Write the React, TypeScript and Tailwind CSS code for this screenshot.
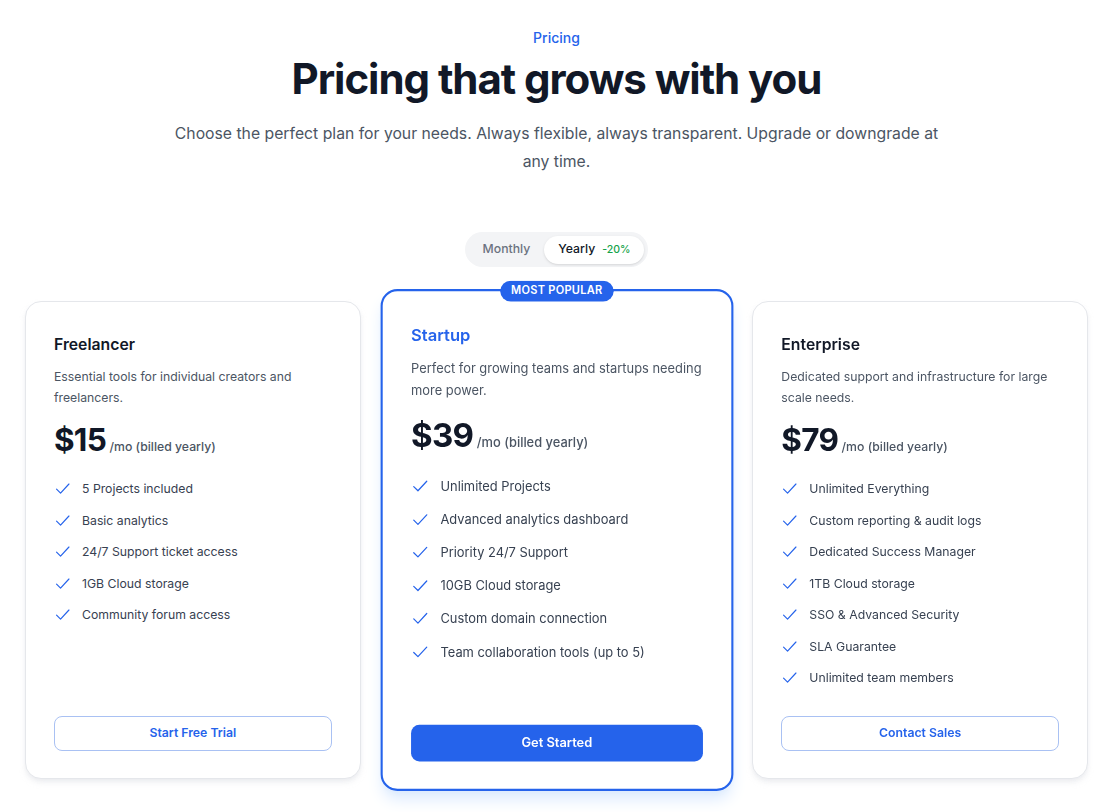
import { useState } from 'react';

type Plan = {
  name: string;
  desc: string;
  price: string;
  features: string[];
  cta: string;
  popular?: boolean;
};

const plans: Plan[] = [
  {
    name: 'Freelancer',
    desc: 'Essential tools for individual creators and freelancers.',
    price: '$15',
    features: ['5 Projects included', 'Basic analytics', '24/7 Support ticket access', '1GB Cloud storage', 'Community forum access'],
    cta: 'Start Free Trial',
  },
  {
    name: 'Startup',
    desc: 'Perfect for growing teams and startups needing more power.',
    price: '$39',
    features: [
      'Unlimited Projects',
      'Advanced analytics dashboard',
      'Priority 24/7 Support',
      '10GB Cloud storage',
      'Custom domain connection',
      'Team collaboration tools (up to 5)',
    ],
    cta: 'Get Started',
    popular: true,
  },
  {
    name: 'Enterprise',
    desc: 'Dedicated support and infrastructure for large scale needs.',
    price: '$79',
    features: [
      'Unlimited Everything',
      'Custom reporting & audit logs',
      'Dedicated Success Manager',
      '1TB Cloud storage',
      'SSO & Advanced Security',
      'SLA Guarantee',
      'Unlimited team members',
    ],
    cta: 'Contact Sales',
  },
];

function CheckIcon() {
  return (
    <svg viewBox="0 0 24 24" fill="none" stroke="currentColor" strokeWidth={1.6} strokeLinecap="round" strokeLinejoin="round" className="h-[17.5px] w-[17.5px] shrink-0 text-[#2563eb]">
      <path d="M3.5 12.5 9 18 20.5 5.5" />
    </svg>
  );
}

function PlanCard({ plan }: { plan: Plan }) {
  return (
    <div
      className={
        plan.popular
          ? 'relative flex h-[478px] scale-105 flex-col rounded-2xl border-2 border-[#2563eb] bg-white px-[27px] pt-[30px] pb-[26px] shadow-lg shadow-blue-100'
          : 'relative flex h-[478px] flex-col rounded-2xl border border-[#e5e7eb] bg-white px-[28px] pt-[31px] pb-[27px] shadow-md shadow-gray-200/70'
      }
    >
      {plan.popular && (
        <div className="absolute left-1/2 top-0 -translate-x-1/2 -translate-y-1/2 whitespace-nowrap rounded-full bg-[#2563eb] px-[10.5px] py-[3px] text-[10.5px] leading-[14px] font-semibold uppercase tracking-wide text-white">
          Most Popular
        </div>
      )}
      <h3
        className={
          plan.popular
            ? 'text-[15.75px] leading-[24.5px] font-semibold text-[#2563eb]'
            : 'text-[15.75px] leading-[24.5px] font-semibold text-[#111827]'
        }
      >
        {plan.name}
      </h3>
      <p className="mt-[8.5px] text-[12.25px] leading-[21px] text-[#4b5563]">{plan.desc}</p>
      <div className="mt-[14px] flex items-baseline gap-[3.5px]">
        <span className="text-[31.5px] leading-[35px] font-bold tracking-tight text-[#111827]">{plan.price}</span>
        <span className="text-[12.25px] font-medium text-[#4b5563]">/mo (billed yearly)</span>
      </div>
      <ul className="mt-[23px] flex flex-col gap-[14px]">
        {plan.features.map((f) => (
          <li key={f} className="flex items-center gap-[10.5px] text-[12.25px] leading-[17.5px] text-[#374151]">
            <CheckIcon />
            <span>{f}</span>
          </li>
        ))}
      </ul>
      <button
        className={
          plan.popular
            ? 'mt-auto h-[35px] w-full rounded-lg bg-[#2563eb] text-[12.25px] font-semibold text-white'
            : 'mt-auto h-[35px] w-full rounded-lg border border-[#a9c1f3] bg-white text-[12.25px] font-semibold text-[#2563eb]'
        }
      >
        {plan.cta}
      </button>
    </div>
  );
}

export default function App() {
  const [yearly, setYearly] = useState(true);

  return (
    <div className="min-h-screen w-[1113px] bg-white pt-[27px] text-center" style={{ fontFamily: 'Inter, "Noto Sans", sans-serif' }}>
      <p className="text-[14px] leading-[21px] font-medium text-[#2563eb]">Pricing</p>
      <h1 className="mt-[10px] text-[42px] leading-[42px] font-bold tracking-tight text-[#111827]">Pricing that grows with you</h1>
      <p className="mx-auto mt-[20px] max-w-[784px] text-[15.75px] leading-[28px] text-[#4b5563]">
        Choose the perfect plan for your needs. Always flexible, always transparent. Upgrade or downgrade at any time.
      </p>

      <div className="mt-[56px] flex justify-center">
        <div className="flex items-center rounded-full bg-[#f3f4f6] p-[3.5px]">
          <button
            onClick={() => setYearly(false)}
            className={
              yearly
                ? 'h-[28px] rounded-full px-[14px] text-[12.25px] font-medium text-[#6b7280]'
                : 'h-[28px] rounded-full bg-white px-[14px] text-[12.25px] font-medium text-[#111827] shadow-sm'
            }
          >
            Monthly
          </button>
          <button
            onClick={() => setYearly(true)}
            className={
              yearly
                ? 'flex h-[28px] items-center gap-[7px] rounded-full bg-white px-[14px] text-[12.25px] font-medium text-[#111827] shadow-sm'
                : 'flex h-[28px] items-center gap-[7px] rounded-full px-[14px] text-[12.25px] font-medium text-[#6b7280]'
            }
          >
            Yearly <span className="text-[10.5px] font-medium text-[#16a34a]">-20%</span>
          </button>
        </div>
      </div>

      <div className="mt-[34px] grid grid-cols-3 gap-[28px] px-[25px] text-left">
        {plans.map((p) => (
          <PlanCard key={p.name} plan={p} />
        ))}
      </div>
    </div>
  );
}
